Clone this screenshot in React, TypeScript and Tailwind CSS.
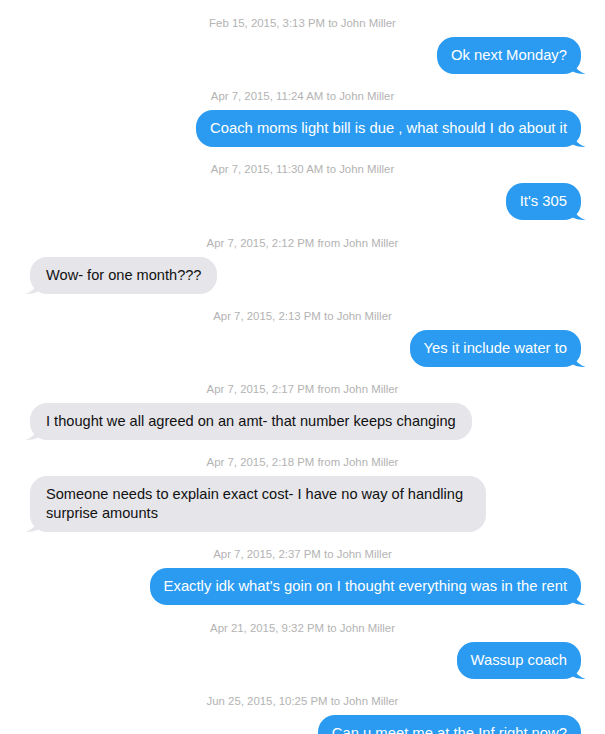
import React from "react";

type Msg = {
  time: string;
  text: string;
  fromMe: boolean;
};

const messages: Msg[] = [
  { time: "Feb 15, 2015, 3:13 PM to John Miller", text: "Ok next Monday?", fromMe: true },
  {
    time: "Apr 7, 2015, 11:24 AM to John Miller",
    text: "Coach moms light bill is due , what should I do about it",
    fromMe: true,
  },
  { time: "Apr 7, 2015, 11:30 AM to John Miller", text: "It's 305", fromMe: true },
  { time: "Apr 7, 2015, 2:12 PM from John Miller", text: "Wow- for one month???", fromMe: false },
  { time: "Apr 7, 2015, 2:13 PM to John Miller", text: "Yes it include water to", fromMe: true },
  {
    time: "Apr 7, 2015, 2:17 PM from John Miller",
    text: "I thought we all agreed on an amt- that number keeps changing",
    fromMe: false,
  },
  {
    time: "Apr 7, 2015, 2:18 PM from John Miller",
    text: "Someone needs to explain exact cost- I have no way of handling surprise amounts",
    fromMe: false,
  },
  {
    time: "Apr 7, 2015, 2:37 PM to John Miller",
    text: "Exactly idk what's goin on I thought everything was in the rent",
    fromMe: true,
  },
  { time: "Apr 21, 2015, 9:32 PM to John Miller", text: "Wassup coach", fromMe: true },
  {
    time: "Jun 25, 2015, 10:25 PM to John Miller",
    text: "Can u meet me at the Inf right now?",
    fromMe: true,
  },
];

function Tail({ fromMe }: { fromMe: boolean }) {
  // little curled tail at the bottom corner of the bubble
  if (fromMe) {
    return (
      <svg
        className="absolute bottom-0 right-[-5px]"
        width="14"
        height="16"
        viewBox="0 0 14 16"
      >
        <path d="M0 0 C2 8 5 13 13.5 16 C7 16 3 15 0 13 Z" fill="#2a9bf1" />
      </svg>
    );
  }
  return (
    <svg
      className="absolute bottom-0 left-[-5px]"
      width="14"
      height="16"
      viewBox="0 0 14 16"
    >
      <path d="M14 0 C12 8 9 13 0.5 16 C7 16 11 15 14 13 Z" fill="#e5e5ea" />
    </svg>
  );
}

function Bubble({ msg }: { msg: Msg }) {
  const blue = msg.fromMe;
  return (
    <div className={blue ? "flex justify-end pr-[24px] pl-[60px]" : "flex justify-start pl-[30px] pr-[60px]"}>
      <div
        className={
          blue
            ? "relative max-w-[460px] rounded-[17px] bg-[#2a9bf1] px-[14px] py-[9px] text-[14.8px] leading-[19px] text-white"
            : "relative max-w-[456px] rounded-[17px] bg-[#e5e5ea] px-[16px] py-[9px] text-[14.6px] leading-[19px] text-[#111]"
        }
      >
        <Tail fromMe={blue} />
        <span className="relative">{msg.text}</span>
      </div>
    </div>
  );
}

export default function App() {
  return (
    <div
      className="min-h-screen w-full bg-white pt-[16px] pb-10"
      style={{ fontFamily: '"Liberation Sans", Arial, Helvetica, sans-serif' }}
    >
      {messages.map((m, i) => (
        <div key={i} className="flex flex-col">
          <div className={i === 0 ? "text-center text-[11.4px] leading-[14px] text-[#b3b3b3]" : "mt-[15.2px] text-center text-[11.4px] leading-[14px] text-[#b3b3b3]"}>
            {m.time}
          </div>
          <div className="mt-[7px]">
            <Bubble msg={m} />
          </div>
        </div>
      ))}
    </div>
  );
}
